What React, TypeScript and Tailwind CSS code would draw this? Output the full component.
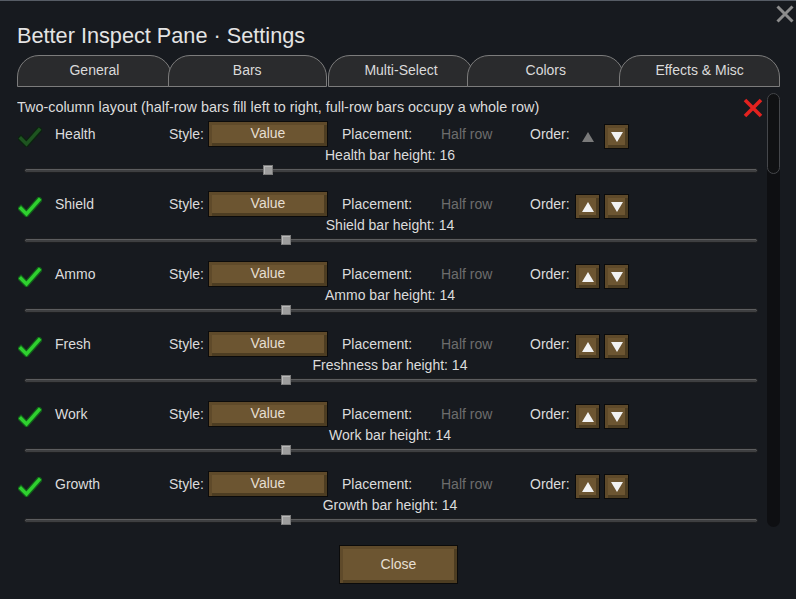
import React from 'react'

interface BarRow {
	id: string
	name: string
	heightLabel: string
	knobLeft: number
	enabled: boolean
	canMoveUp: boolean
}

const rows: BarRow[]=[
	{ id: 'health', name: 'Health', heightLabel: 'Health bar height: 16', knobLeft: 238, enabled: false, canMoveUp: false },
	{ id: 'shield', name: 'Shield', heightLabel: 'Shield bar height: 14', knobLeft: 256, enabled: true, canMoveUp: true },
	{ id: 'ammo', name: 'Ammo', heightLabel: 'Ammo bar height: 14', knobLeft: 256, enabled: true, canMoveUp: true },
	{ id: 'fresh', name: 'Fresh', heightLabel: 'Freshness bar height: 14', knobLeft: 256, enabled: true, canMoveUp: true },
	{ id: 'work', name: 'Work', heightLabel: 'Work bar height: 14', knobLeft: 256, enabled: true, canMoveUp: true },
	{ id: 'growth', name: 'Growth', heightLabel: 'Growth bar height: 14', knobLeft: 256, enabled: true, canMoveUp: true }
]

const tabs=[
	{ label: 'General', cls: 'w-[155px]' },
	{ label: 'Bars', cls: 'w-[159px] -ml-[4px]' },
	{ label: 'Multi-Select', cls: 'w-[147px] ml-[1px]' },
	{ label: 'Colors', cls: 'w-[157px] -ml-[7px]' },
	{ label: 'Effects & Misc', cls: 'w-[161px] -ml-[5px]' }
]

// brown bevelled button, shared by Value / order arrows / Close
const bevel='bg-[#6c5531] border border-[#0b0b0b] shadow-[inset_3px_3px_0_#5f4a2a,inset_-3px_-3px_0_#4d3d22]'

function Check ( { on }: { on: boolean } ) {
	return (
		<svg width="24" height="20" viewBox="0 0 24 20" className="mt-[6px]">
			<path d="M3 11.5 L8.5 17 L21 3" fill="none" stroke={on? '#12601a':'#0c2410'} strokeWidth="6" strokeLinecap="square" />
			<path d="M3 11.5 L8.5 17 L21 3" fill="none" stroke={on? '#2fd02f':'#1e5420'} strokeWidth="3.4" strokeLinecap="square" />
		</svg>
	)
}

function Arrow ( { up }: { up: boolean } ) {
	return (
		<button className={`w-[25px] h-[25px] flex items-center justify-center ${bevel}`}>
			<svg width="12" height="10" viewBox="0 0 12 10">
				<polygon points={up? '6,0 12,10 0,10':'0,0 12,0 6,10'} fill="#f2f2f2" />
			</svg>
		</button>
	)
}

function Row ( { row }: { row: BarRow } ) {
	return (
		<div className="h-[70px] flex flex-col">
			<div className="h-[26px] flex items-center text-[14px] text-[#dcdcdc]">
				<div className="w-[38px] pl-[1px] self-start"><Check on={row.enabled} /></div>
				<span className="w-[114px]">{row.name}</span>
				<span className="w-[39px]">Style:</span>
				<button className={`w-[120px] h-[26px] text-[14px] leading-none text-[#e6dfd2] pb-[2px] ${bevel}`}>Value</button>
				<span className="w-[99px] ml-[14px]">Placement:</span>
				<span className="w-[89px] text-[#6d6d6d]">Half row</span>
				<span className="w-[45px]">Order:</span>
				<div className="flex gap-[4px] self-start mt-[3px]">
					{row.canMoveUp? <Arrow up /> : (
						<div className="w-[25px] h-[25px] flex items-center justify-center">
							<svg width="12" height="10" viewBox="0 0 12 10"><polygon points="6,0 12,10 0,10" fill="#7a7a7a" /></svg>
						</div>
					)}
					<Arrow up={false} />
				</div>
			</div>
			<div className="h-[16px] leading-[16px] text-center text-[14px] text-[#dcdcdc]">{row.heightLabel}</div>
			<div className="h-[10px] mt-[2px] flex items-center">
				<div className="relative ml-[7px] w-[734px] h-[5px] rounded-full bg-[#3e3f41] border border-[#1d1e20] shadow-[inset_0_1px_0_#5c5d5f]">
					<div
						className="absolute top-[-3.5px] w-[10px] h-[10px] bg-[#9d9d9d] border border-[#7c7c7c] shadow-[inset_1px_1px_0_#b9b9b9]"
						style={{ left: row.knobLeft }}
					></div>
				</div>
			</div>
		</div>
	)
}

export default function App () {
	return (
		<div className="relative w-[796px] h-[599px] overflow-hidden bg-[#171a1f] border-t border-[#565c65] pl-[17px] pr-[16px] flex flex-col font-['Liberation_Sans',Arial,sans-serif]">
			<svg width="18" height="18" viewBox="0 0 18 18" className="absolute top-[4px] right-[2px]">
				<path d="M1.5 1.5 L16.5 16.5 M16.5 1.5 L1.5 16.5" stroke="#8c8c8c" strokeWidth="3" />
			</svg>

			<h1 className="pt-[22px] text-[21.7px] leading-[26px] text-[#e4e4e4]">Better Inspect Pane · Settings</h1>

			<div className="flex mt-[6px] h-[32px]">
				{tabs.map( ( tab ) => (
					<div
						key={tab.label}
						className={`${tab.cls} h-[32px] flex items-center justify-center pb-[2px] bg-[#2a2b2d] border border-[#7c7c7c] rounded-t-[22px] text-[14px] text-[#dadada]`}
					>
						{tab.label}
					</div>
				) )}
			</div>

			<div className="flex mt-[6px] h-[434px]">
				<div className="flex-1 overflow-hidden pr-[4px]">
					<div className="h-[20px] mt-[5px] flex items-center justify-between">
						<span className="text-[14.4px] text-[#dcdcdc]">Two-column layout (half-row bars fill left to right, full-row bars occupy a whole row)</span>
						<svg width="20" height="20" viewBox="0 0 20 20">
							<path d="M2 2 L18 18 M18 2 L2 18" stroke="#e3221f" strokeWidth="3.6" />
						</svg>
					</div>
					<div className="mt-[3px]">
						{rows.map( ( row ) => <Row key={row.id} row={row} /> )}
					</div>
				</div>
				<div className="w-[13px] h-full rounded-full bg-[#0e0f12] flex flex-col">
					<div className="h-[81px] rounded-full bg-[#101113] border border-[#45474b]"></div>
				</div>
			</div>

			<div className="flex justify-center mt-[18px]">
				<button className={`w-[119px] h-[39px] text-[14px] text-[#e6dfd2] ${bevel}`}>Close</button>
			</div>
		</div>
	)
}
